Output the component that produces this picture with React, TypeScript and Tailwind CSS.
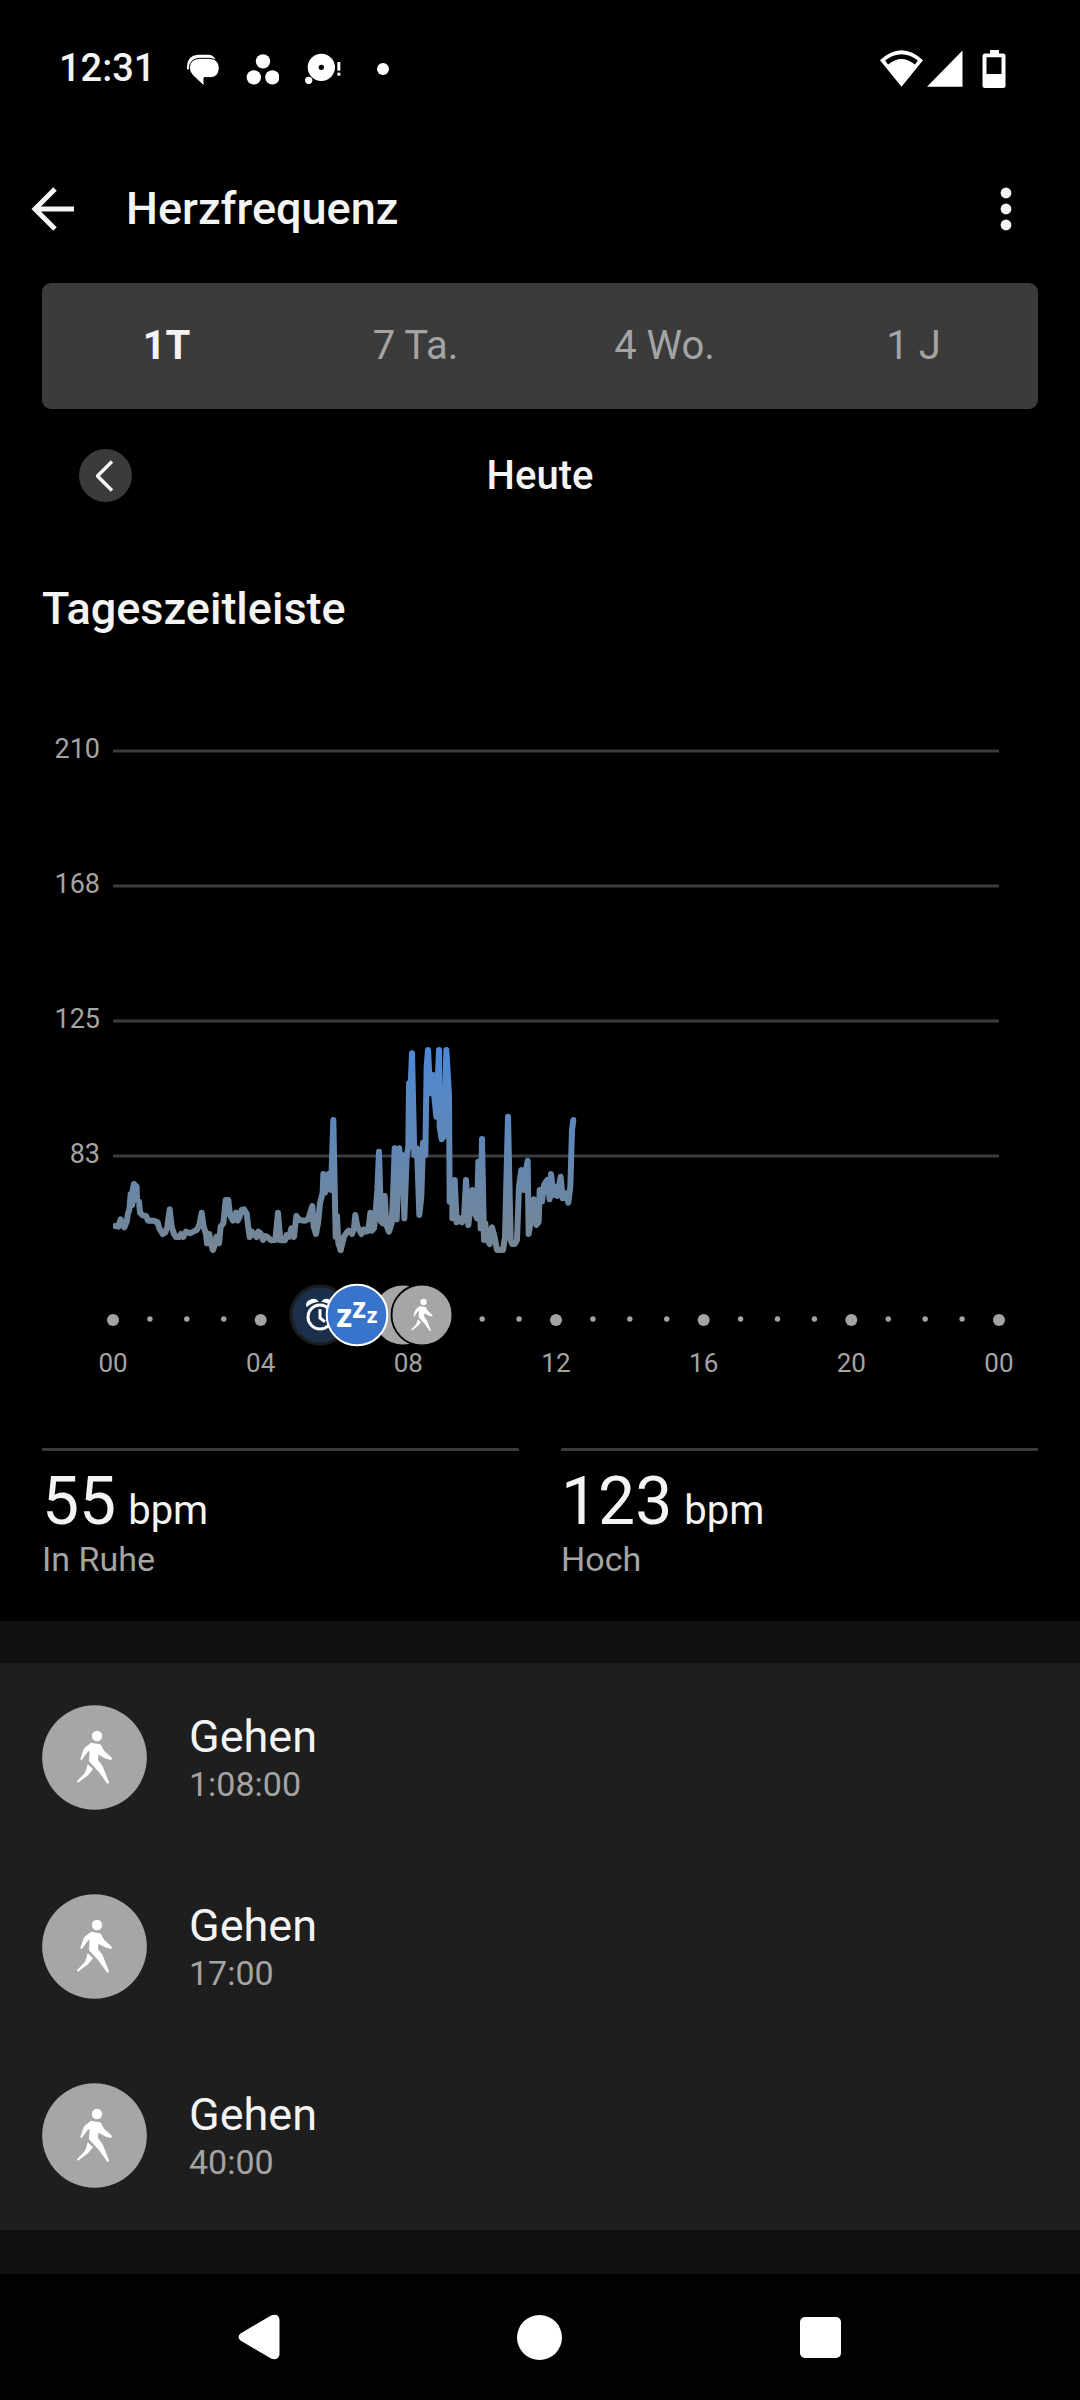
import { useState } from "react";

const RANGES = ["1T", "7 Ta.", "4 Wo.", "1 J"];
const LEVELS = ["210", "168", "125", "83"];
const HOURS = ["00", "04", "08", "12", "16", "20", "00"];

const ACTIVITIES = [
  { name: "Gehen", duration: "1:08:00" },
  { name: "Gehen", duration: "17:00" },
  { name: "Gehen", duration: "40:00" },
];

const STATS = [
  { value: "55", label: "In Ruhe" },
  { value: "123", label: "Hoch" },
];

// midnight to 06:00
const NIGHT =
  "76,588 80,588 85,590 92,568 97,585 103,592 110,575 114,550 118,540 122,492 127,525 128,480 132,462 140,470 141,510 147,515 150,548 158,556 168,558 174,572 190,572 203,577 208,595 218,612 226,608 232,590 239,538 245,590 252,612 258,621 268,621 273,612 280,621 288,605 300,610 310,605 320,600 328,585 335,548 341,590 348,612 351,640 358,612 362,640 369,660 376,640 379,620 387,640 392,590 400,580 407,510 415,510 420,555 429,572 438,548 443,572 449,560 455,540 462,538 470,550 474,585 479,621 486,605 500,621 505,605 512,610 519,630 526,618 532,621 543,631 556,630 564,548 571,631 585,631 590,615 598,620 604,595 612,621 619,558 628,570 645,572 655,568 660,550 667,528 671,590 678,612 684,580 690,520 698,488 700,432 705,488 716,432 723,480 730,270 737,620 741,558 745,640 752,660";

// 06:00 until now
const MORNING =
  "752,660 762,620 770,608 776,602 786,612 792,595 796,555 802,590 808,600 814,612 822,598 828,605 835,602 841,548 846,602 852,595 856,560 862,480 867,365 873,575 879,580 884,498 889,585 897,605 905,580 909,500 914,355 920,568 928,355 934,480 937,375 943,565 950,380 955,350 957,160 962,165 966,70 973,375 981,355 988,555 994,500 999,338 1006,375 1010,110 1014,60 1021,190 1029,135 1033,200 1039,260 1047,60 1049,290 1055,328 1062,318 1069,60 1077,195 1079,515 1087,480 1087,565 1094,450 1100,577 1110,565 1116,577 1122,565 1128,450 1135,585 1140,540 1147,480 1152,545 1161,565 1165,395 1172,595 1176,327 1182,630 1186,580 1190,625 1199,642 1206,592 1214,622 1221,660 1239,660 1245,620 1254,260 1262,630 1267,642 1274,642 1281,630 1287,470 1294,420 1302,480 1308,420 1313,392 1316,612 1323,570 1331,508 1336,570 1339,585 1346,575 1349,480 1356,515 1362,465 1372,450 1379,508 1383,432 1390,495 1396,470 1402,498 1412,440 1418,505 1428,490 1435,518 1441,470 1446,300 1450,270";

function WalkFigure() {
  return (
    <g fill="#fff">
      <circle cx="165" cy="93" r="15.5" />
      <path d="M147 113L174 118Q179 120 181 128L187 138L208 157Q212 163 206 165L192 161L169 149L168 165L182 184L201 232Q200 237 196 236L170 200L143 171Q140 168 141 164L143 137L137 141L120 164Q116 166 115 162L124 135Q126 131 130 127Z" />
      <path d="M137 178L153 193L138 211L110 232Q105 234 105 229L129 203L134 189Z" />
    </g>
  );
}

function StatusBar() {
  return (
    <div className="flex h-[137px] items-center justify-between pr-[74px] pl-[59px]">
      <div className="flex items-center">
        <span className="w-[128px] text-[38px] font-medium">12:31</span>
        <div className="flex items-center gap-[26px]">
          <svg className="h-10 w-[33px]" viewBox="21 15 99 120" fill="#fff">
            <path d="M21 76Q19 34 53 32H88Q100 34 107 46H60L26 76Z" />
            <path
              d="M57 43H90Q118 46 118 73Q116 100 92 101H72V126L38 94Q28 84 28 70Q30 46 57 43Z"
              stroke="#000"
              strokeWidth="3"
            />
          </svg>
          <svg className="h-10 w-[33px]" viewBox="198 15 99 120" fill="#fff">
            <circle cx="249" cy="52" r="21.5" />
            <circle cx="221.5" cy="100" r="21.5" />
            <circle cx="277" cy="100" r="21.5" />
          </svg>
          <svg className="h-10 w-9" viewBox="375 15 108 120" fill="#fff">
            <circle cx="424" cy="70" r="41" />
            <circle cx="424" cy="70" r="8" fill="#000" />
            <circle cx="386" cy="109" r="11" />
            <rect x="472" y="54" width="9" height="26" />
            <rect x="472" y="86" width="9" height="9" />
          </svg>
          <svg className="h-10 w-8" viewBox="561 15 96 120" fill="#fff">
            <circle cx="609" cy="75" r="18" />
          </svg>
        </div>
      </div>
      <div className="flex items-center">
        <svg className="h-[38px] w-[43px]" viewBox="0 0 43 38" fill="#fff">
          <path
            fillRule="evenodd"
            d="M0 10.3Q21.5 -9.7 43 10.3L21.5 36.7ZM5.2 10.6L8 14.6Q21.5 3.4 35 14.6L37.8 10.6Q21.5 -2 5.2 10.6Z"
          />
        </svg>
        <svg className="ml-1 h-[38px] w-9" viewBox="0 0 36 38" fill="#fff">
          <path d="M35.5 0.5V36.7H0Z" />
        </svg>
        <svg className="ml-[19px] h-[38px] w-6" viewBox="0 0 24 38" fill="#fff">
          <path
            fillRule="evenodd"
            d="M8 0H17V3.5H21Q23.5 3.5 23.5 6V35.5Q23.5 38 21 38H3Q0.5 38 0.5 35.5V6Q0.5 3.5 3 3.5H8ZM4.5 7.3V24H19.5V7.3Z"
          />
        </svg>
      </div>
    </div>
  );
}

function Header() {
  return (
    <header className="flex h-[146px] items-center pr-[53px] pb-[2px] pl-[31px]">
      <button aria-label="Zurück" className="w-[95px]">
        <svg className="h-[44px] w-[44px]" viewBox="0 0 44 44" fill="none" stroke="#f4f4f4" strokeWidth="5">
          <path d="M43 22H5M24 2L4 22L24 42" />
        </svg>
      </button>
      <h1 className="text-[45px] font-medium">Herzfrequenz</h1>
      <button aria-label="Mehr" className="ml-auto flex w-[42px] justify-center">
        <svg className="h-[44px] w-3" viewBox="0 0 12 44" fill="#f4f4f4">
          <circle cx="6" cy="6" r="5.4" />
          <circle cx="6" cy="22" r="5.4" />
          <circle cx="6" cy="38" r="5.4" />
        </svg>
      </button>
    </header>
  );
}

function Chart() {
  return (
    <div className="mt-[6px] flex pr-[81px]">
      <div className="w-[113px] shrink-0 pr-[13px] text-right text-[27px] text-[#a4a4a4]">
        {LEVELS.map((level) => (
          <div key={level} className="flex h-[135px] items-center justify-end">
            {level}
          </div>
        ))}
      </div>
      <div className="min-w-0 flex-1">
        <svg className="h-[600px] w-full" viewBox="0 0 2658 1800" preserveAspectRatio="none" fill="none">
          <defs>
            <linearGradient id="bpm" gradientUnits="userSpaceOnUse" x1="0" y1="60" x2="0" y2="660">
              <stop offset="0" stopColor="#4d88d6" />
              <stop offset="1" stopColor="#768692" />
            </linearGradient>
          </defs>
          {LEVELS.map((level, i) => (
            <path key={level} d={`M0 ${207 + i * 405}H2658`} stroke="#3c3c3c" strokeWidth="9" />
          ))}
          <g transform="translate(-69 1044)" stroke="url(#bpm)" strokeWidth="18" strokeLinecap="round" strokeLinejoin="round">
            <polyline points={NIGHT} />
            <polyline points={MORNING} />
          </g>
        </svg>
        <Timeline />
        <div className="flex justify-between text-[26px] leading-[26px] text-[#a4a4a4]">
          {HOURS.map((hour, i) => (
            <span key={i} className="flex w-0 justify-center">
              {hour}
            </span>
          ))}
        </div>
      </div>
    </div>
  );
}

const BADGES = [
  { hour: 5.6, icon: <AlarmBadge /> },
  { hour: 7.85, icon: <Disc /> },
  { hour: 6.6, icon: <SleepBadge /> },
  { hour: 8.36, icon: <WalkBadge /> },
];

function Timeline() {
  return (
    <div className="relative h-[68px]">
      <svg className="h-full w-full overflow-visible" fill="#a4a4a4">
        {Array.from({ length: 25 }, (_, h) => (
          <circle key={h} cx={`${(h / 24) * 100}%`} cy={h % 4 ? 37 : 38} r={h % 4 ? 2.7 : 6} />
        ))}
      </svg>
      {BADGES.map((badge) => (
        <div
          key={badge.hour}
          className="absolute top-px h-16 w-16 -translate-x-1/2"
          style={{ left: `${(badge.hour / 24) * 100}%` }}
        >
          {badge.icon}
        </div>
      ))}
    </div>
  );
}

function AlarmBadge() {
  return (
    <svg className="h-16 w-16" viewBox="52 71 192 192" fill="none" stroke="#fff">
      <circle cx="148" cy="167" r="87" fill="#1a2f49" stroke="#1c1c1c" strokeWidth="9" />
      <circle cx="148" cy="173" r="36" strokeWidth="9" />
      <path d="M148 150V176L163 187" strokeWidth="9" />
      <path d="M108 143Q102 128 118 121Q136 114 144 127Q122 130 108 143Z" fill="#fff" stroke="none" />
      <path d="M188 143Q194 128 178 121Q160 114 152 127Q174 130 188 143Z" fill="#fff" stroke="none" />
    </svg>
  );
}

function SleepBadge() {
  return (
    <svg className="h-16 w-16 font-['Open_Sans',sans-serif] font-bold" viewBox="165 71 192 192" fill="#fff">
      <circle cx="261" cy="167" r="91" fill="#3873cc" stroke="#fff" strokeWidth="6" />
      <text x="199" y="202" fontSize="98">z</text>
      <text x="247" y="177" fontSize="85">z</text>
      <text x="290" y="190" fontSize="66">z</text>
    </svg>
  );
}

function Disc() {
  return (
    <svg className="h-16 w-16" viewBox="0 0 315 315">
      <circle cx="157.5" cy="157.5" r="150" fill="#a6a6a6" stroke="#000" strokeWidth="9" />
    </svg>
  );
}

function WalkBadge() {
  return (
    <svg className="h-16 w-16" viewBox="0 0 315 315">
      <circle cx="157.5" cy="157.5" r="150" fill="#a6a6a6" stroke="#000" strokeWidth="9" />
      <WalkFigure />
    </svg>
  );
}

export default function App() {
  const [range, setRange] = useState("1T");

  return (
    <div className="min-h-screen bg-black font-[Roboto,sans-serif] text-[#f4f4f4]">
      <StatusBar />
      <Header />

      <main>
        <div role="tablist" className="mx-[42px] grid h-[126px] grid-cols-4 rounded-[9px] bg-[#3b3b3b] text-[40px]">
          {RANGES.map((item) => (
            <button
              key={item}
              role="tab"
              aria-selected={item === range}
              onClick={() => setRange(item)}
              className={item === range ? "font-bold" : "text-[#a4a4a4]"}
            >
              {item}
            </button>
          ))}
        </div>

        {/* Day picker */}
        <div className="grid h-[133px] grid-cols-[1fr_auto_1fr] items-center px-[79px]">
          <button
            aria-label="Vorheriger Tag"
            className="flex h-[53px] w-[53px] items-center justify-center rounded-full bg-[#3b3b3b]"
          >
            <svg className="h-8 w-5" viewBox="0 0 20 32" fill="none" stroke="#f4f4f4" strokeWidth="3.5">
              <path d="M16 1.5L1.5 16L16 30.5" />
            </svg>
          </button>
          <span className="text-[40px] font-medium">Heute</span>
        </div>

        <h2 className="flex h-[134px] items-center px-[42px] text-[45px] font-medium">Tageszeitleiste</h2>
        <Chart />

        {/* Summary */}
        <div className="mt-[72px] grid grid-cols-2 gap-[42px] px-[42px] pb-[42px]">
          {STATS.map((stat) => (
            <div key={stat.label} className="border-t-3 border-[#3b3b3b] pt-[14px]">
              <div className="flex items-baseline gap-3 text-[66px] leading-[74px]">
                {stat.value}
                <span className="text-[40px] leading-none">bpm</span>
              </div>
              <div className="text-[34px] leading-10 text-[#a4a4a4]">{stat.label}</div>
            </div>
          ))}
        </div>

        {/* Activities */}
        <ul className="border-t-42 border-b-44 border-[#101010] bg-[#1e1e1e]">
          {ACTIVITIES.map((activity) => (
            <li key={activity.duration} className="flex h-[189px] items-center gap-[42px] px-[42px]">
              <svg className="h-[105px] w-[105px]" viewBox="0 0 315 315">
                <circle cx="157.5" cy="157.5" r="157" fill="#a6a6a6" />
                <WalkFigure />
              </svg>
              <div className="pb-[2px]">
                <div className="text-[45px] leading-[54px]">{activity.name}</div>
                <div className="text-[34px] leading-10 text-[#a4a4a4]">{activity.duration}</div>
              </div>
            </li>
          ))}
        </ul>
      </main>

      <nav className="grid h-[126px] grid-cols-3 bg-[#020202] px-[11%]">
        <button aria-label="Zurück" className="flex items-center justify-center">
          <svg className="h-[46px] w-[42px]" viewBox="0 0 42 46" fill="#fff">
            <path d="M2.5 19.5L33 1.5Q41 -1 41.5 6V40Q41 47 33 44.5L2.5 26.5Q-1.5 23 2.5 19.5Z" />
          </svg>
        </button>
        <button aria-label="Startseite" className="flex items-center justify-center">
          <span className="h-[45px] w-[45px] rounded-full bg-white" />
        </button>
        <button aria-label="Übersicht" className="flex items-center justify-center">
          <span className="h-[41px] w-[41px] rounded-[5px] bg-white" />
        </button>
      </nav>
    </div>
  );
}
